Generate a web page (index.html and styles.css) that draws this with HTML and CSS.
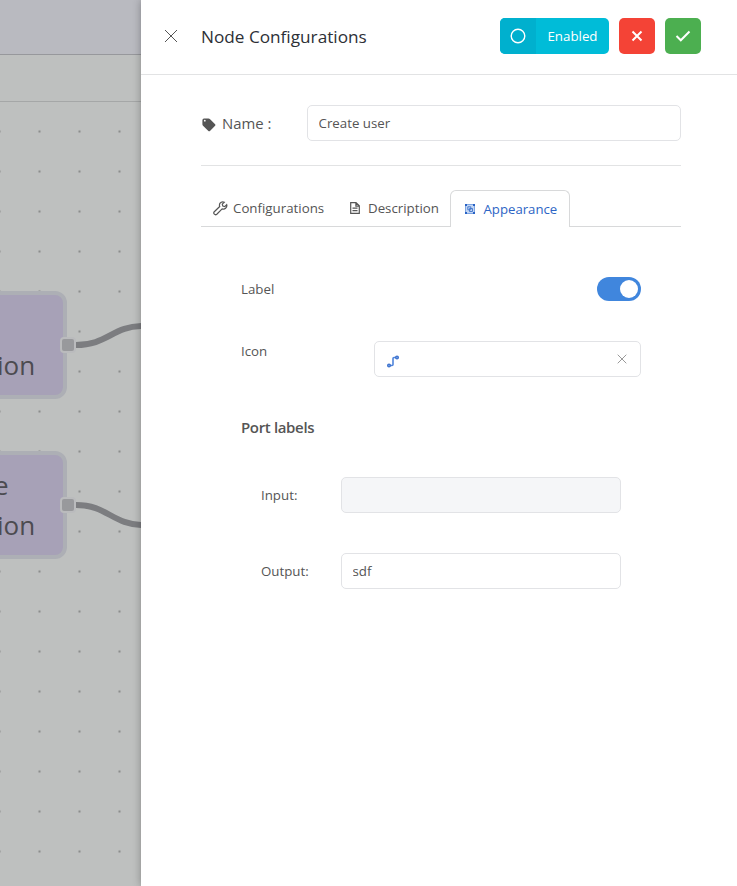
FILE: index.html
```html
<!DOCTYPE html>
<html lang="en">
<head>
<meta charset="utf-8">
<title>Node Configurations</title>
<link rel="stylesheet" href="styles.css">
</head>
<body>
<div class="app">
  <div class="workspace">
    <div class="topbar"></div>
    <div class="toolbar"></div>
    <div class="canvas">
      <svg class="links" width="141" height="784" viewBox="0 102 141 784">
        <path d="M76 345C108 345 112 326 144 326M76 505C108 505 112 525 144 525"/>
      </svg>
      <div class="node node-first"><span class="node-text">ion</span><i class="port"></i></div>
      <div class="node node-second"><span class="node-text"><span class="node-line">e</span>ion</span><i class="port"></i></div>
    </div>
  </div>
  <main class="panel">
    <header class="panel-header">
      <svg class="close" width="14" height="14" viewBox="0 0 14 14"><path d="M1 1l12 12M13 1L1 13"/></svg>
      <h1>Node Configurations</h1>
      <button class="btn enabled"><span class="enabled-icon"><svg width="16" height="16" viewBox="0 0 16 16"><circle cx="8" cy="8" r="6.8"/></svg></span><span class="enabled-text">Enabled</span></button>
      <button class="btn cancel"><svg width="12" height="12" viewBox="0 0 12 12"><path d="M1.5 1.5l9 9M10.5 1.5l-9 9"/></svg></button>
      <button class="btn accept"><svg width="16" height="12" viewBox="0 0 16 12"><path d="M1.5 6l4.3 4.3L14.5 1.5"/></svg></button>
    </header>
    <div class="panel-body">
      <div class="name-row">
        <svg class="tag" width="14" height="14" viewBox="0 0 14 14"><path fill-rule="evenodd" d="M.4 2.2Q.4.6 2 .6h4.5q.9 0 1.6.6l5 5q.8.8 0 1.6L8 13q-.8.7-1.6 0L1 7.7Q.4 7.1.4 6.300zM2.800 1.800a.9.9 0 100 1.800.9.9 0 000-1.800z"/></svg>
        <label class="name-label" for="name">Name :</label>
        <input id="name" class="field" value="Create user">
      </div>
      <nav class="tabs">
        <div class="tab tab-config">
          <svg width="15" height="15" viewBox="0 0 15 15" class="line-icon"><path d="M13.700 3.700l-2 1.900-1.900-.5-.5-1.900 2-2C9.700.6 8 1 7.100 2.200c-.8 1.100-.8 2.200-.4 3.300L1.300 10.700c-1.500 1.700.8 4 2.500 2.500L9.100 7.900c1.200.5 2.500.3 3.500-.6 1.200-1 1.500-2.300 1.100-3.600z"/></svg>
          <span>Configurations</span>
        </div>
        <div class="tab tab-desc">
          <svg width="10" height="12" viewBox="0 0 10 12" class="line-icon"><path d="M.7.700h5.300l3.300 3.100v7.500H.700zM5.900.800v3.300h3.300M2.500 6.200h5M2.500 8.700h5"/></svg>
          <span>Description</span>
        </div>
        <div class="tab tab-look active">
          <svg width="10" height="10" viewBox="0 0 10 10"><path d="M.5.500h9v9h-9z" fill="#c3d6f3" stroke="#7ea5e2"/><path d="M0 0h2v2H0zM8 0h2v2H8zM0 8h2v2H0zM8 8h2v2H8z" fill="#2862c5"/><path d="M2.800 2.800h3v3h-3zM4.500 4.500h3v3h-3z" fill="none" stroke="#3f74cc" stroke-width=".9"/></svg>
          <span>Appearance</span>
        </div>
      </nav>
      <section class="settings">
        <div class="row label-row"><span class="caption">Label</span><span class="switch"><i></i></span></div>
        <div class="row icon-row"><span class="caption">Icon</span>
          <div class="icon-field">
            <svg width="12" height="13" viewBox="0 0 12 13"><path d="M2 10.500h3q1 0 1-1v-6q0-1 1-1h3" fill="none" stroke="#5085db" stroke-width="1.600"/><circle cx="2" cy="10.500" r="1.400" fill="#7ba3e4" stroke="#3c71cd" stroke-width="1.200"/><circle cx="10" cy="2.500" r="1.400" fill="#7ba3e4" stroke="#3c71cd" stroke-width="1.200"/></svg>
            <svg width="10" height="10" viewBox="0 0 10 10"><path d="M.7.700l8.600 8.600M9.300.700L.700 9.300" stroke="#999" stroke-width="1"/></svg>
          </div>
        </div>
        <h2>Port labels</h2>
        <div class="port-row"><label class="caption" for="input">Input:</label><input id="input" class="field" disabled></div>
        <div class="port-row"><label class="caption" for="output">Output:</label><input id="output" class="field" value="sdf"></div>
      </section>
    </div>
  </main>
</div>
</body>
</html>
```
FILE: styles.css
```css
* { box-sizing: border-box; }
body { margin: 0; overflow: hidden; color: #555; font: 13.3px/20px "Open Sans", "Noto Sans", sans-serif; }
svg { display: block; flex: none; }
.app { display: flex; width: 737px; height: 886px; }
.workspace { display: flex; flex-direction: column; flex: 0 0 141px; background: #bec0bf; }
.topbar { height: 55px; background: #b9bac0; border-bottom: 1px solid #97989c; }
.toolbar { height: 47px; border-bottom: 1px solid #a5a7a7; }
.canvas { position: relative; flex: 1; overflow: hidden; background: radial-gradient(circle, #8b8d8c 0 1px, transparent 1.6px) -20.500px 9.500px / 40px 40px; }
.links { position: absolute; inset: 0; }
.links path { fill: none; stroke: #7c7d80; stroke-width: 6; }
.node { position: absolute; left: -110px; width: 177px; height: 108px; border: 4px solid #adafb5; border-radius: 12px; background: #a7a1b7; }
.node-first { top: 189px; }
.node-second { top: 349px; }
.node-text { position: absolute; left: 103px; bottom: 10px; color: #4c4b50; font-size: 26px; line-height: 40px; }
.node-line { display: block; margin-left: -3px; }
.port { position: absolute; right: -12.500px; top: 42px; width: 16px; height: 16px; border: 2px solid #babbbd; border-radius: 4px; background: #98999c; }
.panel { position: relative; flex: 1; background: #fff; box-shadow: 0 0 8px rgba(0, 0, 0, .3); }
.panel-header { display: flex; align-items: center; height: 75px; padding: 0 36px 2px 23px; border-bottom: 1px solid #e2e3e4; }
.close { stroke: #555; fill: none; stroke-width: 1; }
h1 { flex: 1; margin: 2px 0 0 23px; color: #2d3036; font-size: 17.200px; line-height: 26px; font-weight: 400; }
.btn { display: flex; align-items: center; justify-content: center; width: 36px; height: 36px; margin: 0 0 0 10px; padding: 0; border: 0; border-radius: 5px; color: #fff; font: inherit; }
.btn svg { fill: none; stroke: #fff; stroke-width: 2; }
.enabled { width: 109px; overflow: hidden; background: #00bcd8; }
.enabled-icon { display: flex; align-items: center; justify-content: center; width: 36px; height: 36px; background: #00b0ce; }
.btn .enabled-icon svg { stroke-width: 1.400; }
.enabled-text { flex: 1; text-align: center; }
.cancel { background: #f44336; }
.accept { background: #4caf50; }
.panel-body { padding: 30px 56px 0 60px; }
.name-row { display: flex; align-items: center; height: 61px; padding-bottom: 24px; border-bottom: 1px solid #e2e3e4; }
.tag { margin: 3px 6px 0 1px; fill: #555; }
.name-label { width: 85px; padding-bottom: 1px; font-size: 14.900px; }
.field { flex: 1; min-width: 0; height: 36px; padding: 0 11px 0 10.500px; border: 1px solid #e2e3e6; border-radius: 5px; color: #555; background: #fff; font: inherit; }
.field:disabled { background: #f5f6f8; }
.tabs { display: flex; height: 37px; margin-top: 24px; box-shadow: inset 0 -1px #d8d9da; }
.tab { display: flex; align-items: center; height: 36px; }
.tab-config { width: 147px; padding-left: 12px; gap: 5px; }
.tab-desc { width: 102px; padding-left: 2px; gap: 8px; }
.tab-look { width: 120px; height: 37px; padding-left: 14px; gap: 8.500px; border: 1px solid #d8d9da; border-bottom: 0; border-radius: 6px 6px 0 0; background: #fff; color: #2d65c5; font-size: 13.200px; }
.line-icon { fill: none; stroke: #555; stroke-width: 1.200; }
.settings { padding: 44px 40px 0; }
.row { display: flex; justify-content: space-between; }
.label-row { align-items: center; height: 36px; }
.switch { display: flex; align-items: center; justify-content: flex-end; width: 44px; height: 24px; padding: 3px; border-radius: 12px; background: #4086dd; }
.switch i { width: 18px; height: 18px; border-radius: 50%; background: #fff; }
.icon-row { height: 36px; margin-top: 34px; }
.icon-field { display: flex; align-items: center; justify-content: space-between; width: 267px; height: 36px; padding: 0 13px 0 12px; border: 1px solid #e2e3e6; border-radius: 5px; }
.icon-field svg:first-child { margin-top: 4px; }
h2 { margin: 38px 0 37px; font-size: 15px; line-height: 25px; font-weight: 600; letter-spacing: -.35px; }
.port-row { display: flex; align-items: center; height: 36px; margin: 0 20px 40px; }
.port-row .caption { width: 80px; }
```
